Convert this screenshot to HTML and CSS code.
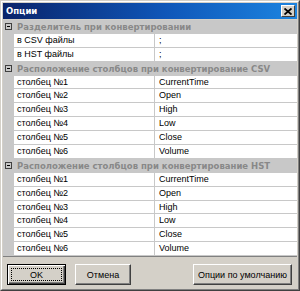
FILE: index.html
```html
<!DOCTYPE html>
<html>
<head>
<meta charset="utf-8">
<link rel="stylesheet" href="styles.css">
</head>
<body>
<div class="window">
  <div class="frame">
    <div class="titlebar">
      <span class="title">Опции</span>
      <span class="close"><svg width="8" height="7" viewBox="0 0 8 7"><path d="M0.5 0.5 L7.5 6.5 M7.5 0.5 L0.5 6.5" stroke="#000" stroke-width="1.8"/></svg></span>
    </div>
    <div class="grid">
      <div class="cat"><span class="toggle"><svg width="7" height="7" viewBox="0 0 7 7"><rect x="0.5" y="0.5" width="6" height="6" fill="none" stroke="#404040"/><path d="M2 3.5 H5" stroke="#000"/></svg></span><span class="cat-label">Разделитель при конвертировании</span></div>
      <div class="row"><span class="gutter"></span><span class="name">в CSV файлы</span><span class="value">;</span></div>
      <div class="row"><span class="gutter"></span><span class="name">в HST файлы</span><span class="value">;</span></div>
      <div class="cat"><span class="toggle"><svg width="7" height="7" viewBox="0 0 7 7"><rect x="0.5" y="0.5" width="6" height="6" fill="none" stroke="#404040"/><path d="M2 3.5 H5" stroke="#000"/></svg></span><span class="cat-label">Расположение столбцов при конвертирование CSV</span></div>
      <div class="row"><span class="gutter"></span><span class="name">столбец №1</span><span class="value">CurrentTime</span></div>
      <div class="row"><span class="gutter"></span><span class="name">столбец №2</span><span class="value">Open</span></div>
      <div class="row"><span class="gutter"></span><span class="name">столбец №3</span><span class="value">High</span></div>
      <div class="row"><span class="gutter"></span><span class="name">столбец №4</span><span class="value">Low</span></div>
      <div class="row"><span class="gutter"></span><span class="name">столбец №5</span><span class="value">Close</span></div>
      <div class="row"><span class="gutter"></span><span class="name">столбец №6</span><span class="value">Volume</span></div>
      <div class="cat"><span class="toggle"><svg width="7" height="7" viewBox="0 0 7 7"><rect x="0.5" y="0.5" width="6" height="6" fill="none" stroke="#404040"/><path d="M2 3.5 H5" stroke="#000"/></svg></span><span class="cat-label">Расположение столбцов при конвертирование HST</span></div>
      <div class="row"><span class="gutter"></span><span class="name">столбец №1</span><span class="value">CurrentTime</span></div>
      <div class="row"><span class="gutter"></span><span class="name">столбец №2</span><span class="value">Open</span></div>
      <div class="row"><span class="gutter"></span><span class="name">столбец №3</span><span class="value">High</span></div>
      <div class="row"><span class="gutter"></span><span class="name">столбец №4</span><span class="value">Low</span></div>
      <div class="row"><span class="gutter"></span><span class="name">столбец №5</span><span class="value">Close</span></div>
      <div class="row"><span class="gutter"></span><span class="name">столбец №6</span><span class="value">Volume</span></div>
    </div>
    <div class="buttons">
      <button class="btn btn-default"><span class="focus">OK</span></button>
      <button class="btn btn-cancel">Отмена</button>
      <span class="spacer"></span>
      <button class="btn btn-reset">Опции по умолчанию</button>
    </div>
  </div>
</div>
</body>
</html>
```
FILE: styles.css
```css
html, body {
  margin: 0;
  padding: 0;
  background: #d4d0c8;
}
.window {
  width: 300px;
  height: 291px;
  box-sizing: border-box;
  border: 1px solid;
  border-color: #d4d0c8 #404040 #404040 #d4d0c8;
  background: #d4d0c8;
}
.frame {
  height: 100%;
  box-sizing: border-box;
  border: 1px solid;
  border-color: #ffffff #808080 #808080 #ffffff;
  padding: 1px;
  display: flex;
  flex-direction: column;
}
.titlebar {
  height: 16px;
  flex: none;
  display: flex;
  align-items: center;
  justify-content: space-between;
  background: linear-gradient(90deg, #0a246a 0%, #0f56b8 55%, #1c84e0 100%);
  padding: 0 2px 0 3px;
}
.title {
  color: #fff;
  font: bold 8.5px "DejaVu Sans", sans-serif;
}
.close {
  width: 14px;
  height: 12px;
  box-sizing: border-box;
  background: #d4d0c8;
  border: 1px solid;
  border-color: #fff #404040 #404040 #fff;
  display: flex;
  align-items: center;
  justify-content: center;
}
.close svg { display: block; }
.grid {
  margin-top: 1px;
  flex: none;
  border-bottom: 1px solid #808080;
  background: #fff;
}
.cat {
  height: 13.9px;
  box-sizing: border-box;
  background: #c8c8c8;
  display: flex;
  align-items: center;
}
.toggle {
  width: 11px;
  padding-left: 2px;
  box-sizing: border-box;
  display: flex;
  align-items: center;
}
.toggle svg { display: block; }
.cat-label {
  padding-left: 3px;
  font: bold 8.5px "DejaVu Sans", sans-serif;
  color: #888888;
  white-space: nowrap;
}
.row {
  height: 13.9px;
  box-sizing: border-box;
  display: flex;
  font: 9px "Liberation Sans", Arial, sans-serif;
  color: #000;
  line-height: 13px;
}
.gutter {
  width: 11px;
  flex: none;
  background: #c8c8c8;
}
.name {
  width: 141px;
  flex: none;
  padding-left: 3px;
  box-sizing: border-box;
  border-right: 1px solid #c8c8c8;
  border-bottom: 1px solid #c8c8c8;
  white-space: nowrap;
}
.value {
  flex: 1;
  padding-left: 4px;
  border-bottom: 1px solid #c8c8c8;
  white-space: nowrap;
}
.buttons {
  display: flex;
  align-items: center;
  padding: 7px 5px 0 4px;
}
.spacer { flex: 1; }
.btn {
  height: 21px;
  box-sizing: border-box;
  margin: 0;
  padding: 0;
  background: #d4d0c8;
  font: 9px "Liberation Sans", Arial, sans-serif;
  color: #000;
  border: 1px solid;
  border-color: #fff #404040 #404040 #fff;
  box-shadow: inset -1px -1px #808080;
}
.btn-default {
  width: 59px;
  border: 1px solid #000;
  box-shadow: inset 1px 1px #fff, inset -1px -1px #404040, inset -2px -2px #808080;
  display: flex;
  padding: 3px;
}
.focus {
  flex: 1;
  border: 1px dotted #000;
  display: flex;
  align-items: center;
  justify-content: center;
}
.btn-cancel {
  width: 56px;
  margin-left: 9px;
}
.btn-reset {
  width: 99px;
}
```
